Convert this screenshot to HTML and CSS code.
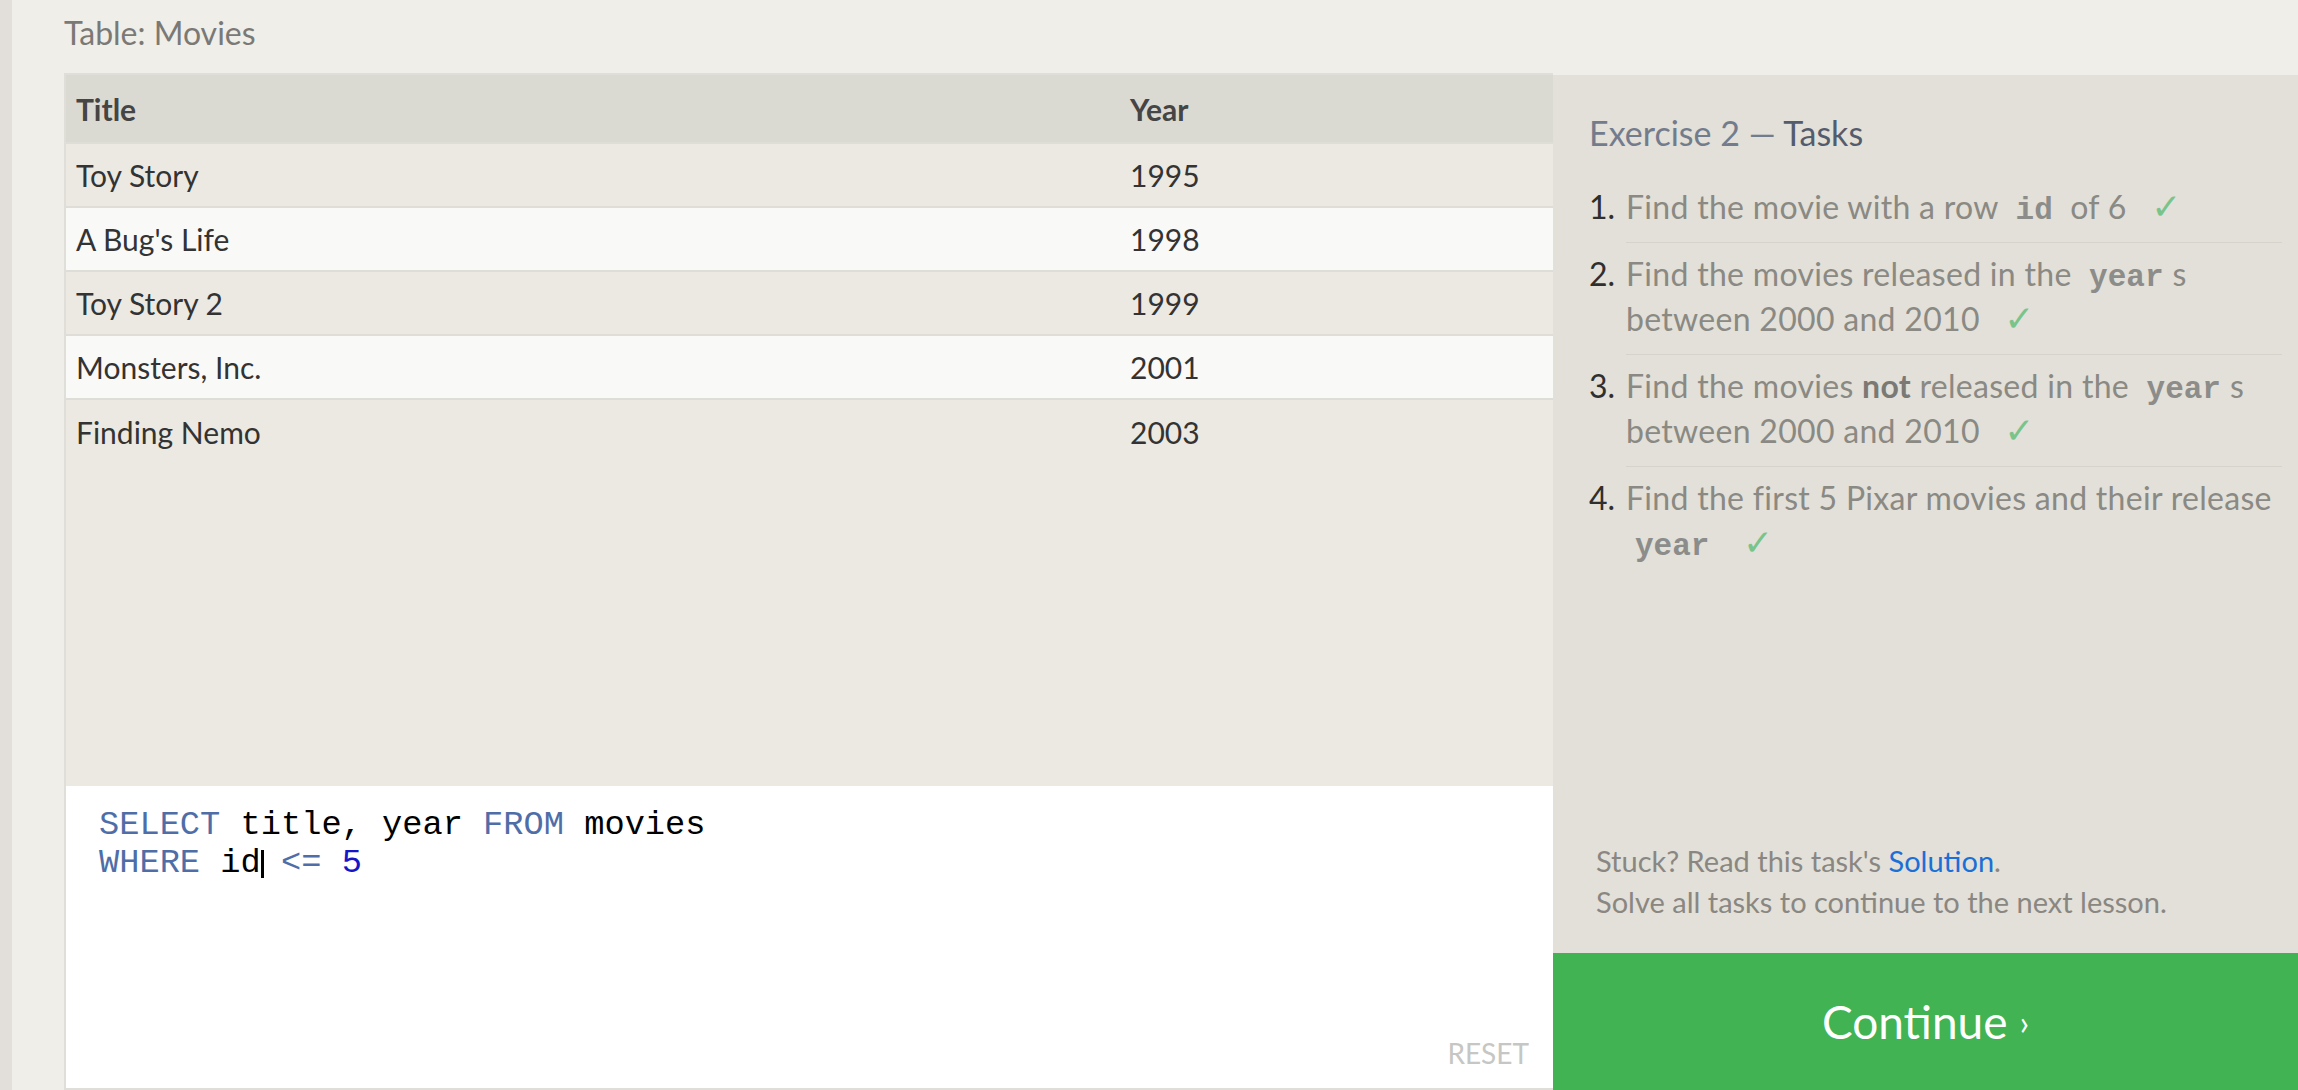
FILE: index.html
```html
<!DOCTYPE html>
<html lang="en">
<head>
<meta charset="utf-8">
<title>SQL Lesson — Movies</title>
<link rel="stylesheet" href="styles.css">
</head>
<body>
<div class="page">
  <div class="strip"></div>
  <main class="main">
    <div class="table-label">Table: Movies</div>
    <div class="workspace">
      <section class="left">
        <div class="results">
          <table class="results-table">
            <colgroup><col class="col-title"><col class="col-year"></colgroup>
            <thead>
              <tr><th>Title</th><th>Year</th></tr>
            </thead>
            <tbody>
              <tr><td>Toy Story</td><td>1995</td></tr>
              <tr><td>A Bug's Life</td><td>1998</td></tr>
              <tr><td>Toy Story 2</td><td>1999</td></tr>
              <tr><td>Monsters, Inc.</td><td>2001</td></tr>
              <tr><td>Finding Nemo</td><td>2003</td></tr>
            </tbody>
          </table>
        </div>
        <div class="editor">
          <pre class="code"><span class="kw">SELECT</span> title, year <span class="kw">FROM</span> movies
<span class="kw">WHERE</span> id<span class="cursor"></span> <span class="op">&lt;=</span> <span class="num">5</span></pre>
          <div class="reset">RESET</div>
        </div>
      </section>
      <aside class="right">
        <div class="tasks">
          <h2 class="tasks-title">Exercise 2 — <span class="tasks-strong">Tasks</span></h2>
          <ol class="task-list">
            <li class="task"><span class="task-num">1.</span><div class="task-body">Find the movie with a row <code class="kc">id</code> of 6 <span class="check">✓</span></div></li>
            <li class="task"><span class="task-num">2.</span><div class="task-body">Find the movies released in the <code class="kc">year</code>s between 2000 and 2010 <span class="check">✓</span></div></li>
            <li class="task"><span class="task-num">3.</span><div class="task-body">Find the movies <strong>not</strong> released in the <code class="kc">year</code>s between 2000 and 2010 <span class="check">✓</span></div></li>
            <li class="task"><span class="task-num">4.</span><div class="task-body">Find the first 5 Pixar movies and their release <code class="kc">year</code> <span class="check">✓</span></div></li>
          </ol>
        </div>
        <div class="footer">
          <div>Stuck? Read this task's <a class="solution" href="#">Solution</a>.</div>
          <div>Solve all tasks to continue to the next lesson.</div>
        </div>
        <div class="continue">Continue <span class="chev">›</span></div>
      </aside>
    </div>
  </main>
</div>
</body>
</html>
```

FILE: styles.css
```css
* { box-sizing: border-box; }
html, body { margin: 0; padding: 0; }
body {
  background: #f0eee8;
  font-family: Lato, "Open Sans", "DejaVu Sans", sans-serif;
  overflow: hidden;
}
.page { display: flex; height: 1090px; }
.strip { width: 12px; flex: none; background: #e2dfda; }
.main { flex: 1; min-width: 0; padding-left: 52px; display: flex; flex-direction: column; }
.table-label {
  height: 73px;
  padding-top: 15px;
  font-size: 32px;
  line-height: 36px;
  color: #7a7976;
}
.workspace { flex: 1; min-height: 0; display: flex; }

.left {
  width: 1489px;
  flex: none;
  display: flex;
  flex-direction: column;
  border-left: 2px solid #e0ded8;
  border-top: 2px solid #e0ded8;
  border-bottom: 2px solid #e0ded8;
}
.results { height: 711px; flex: none; background: #ebe9e2; }
.results-table {
  width: 100%;
  table-layout: fixed;
  border-collapse: collapse;
  font-size: 30px;
  color: #333;
}
.col-title { width: 1054px; }
.results-table th {
  height: 68px;
  padding: 0 10px;
  text-align: left;
  font-weight: bold;
  color: #454545;
  background: #dbdad2;
}
.results-table td {
  height: 64px;
  padding: 0 10px;
  border-top: 2px solid #dfddd7;
}
.results-table tbody tr:nth-child(odd) td { background: #ebe9e2; }
.results-table tbody tr:nth-child(even) td { background: #f9f9f8; }

.editor {
  flex: 1;
  background: #fff;
  display: flex;
  flex-direction: column;
}
.code {
  flex: 1;
  margin: 0;
  padding: 20px 0 0 33px;
  font-family: "Liberation Mono", "DejaVu Sans Mono", monospace;
  font-size: 33.7px;
  line-height: 38px;
  color: #000;
}
.kw { color: #4f6ea8; }
.op { color: #4f6ea8; }
.num { color: #1616c8; }
.cursor {
  display: inline-block;
  width: 3px;
  height: 28px;
  margin-right: -3px;
  vertical-align: -6px;
  background: #000;
}
.reset {
  align-self: flex-end;
  padding: 0 24px 18px 0;
  font-size: 28px;
  line-height: 34px;
  color: #c6c6c4;
}

.right {
  flex: 1;
  min-width: 0;
  margin-top: 2px;
  display: flex;
  flex-direction: column;
  background: #e2e0d8;
}
.tasks { flex: 1; padding: 39px 16px 0 36px; }
.tasks-title {
  margin: 0;
  font-size: 34px;
  line-height: 38px;
  font-weight: normal;
  color: #737c8c;
}
.tasks-strong { color: #535c6e; }
.task-list { margin: 24px 0 0; padding: 0; list-style: none; }
.task { display: flex; font-size: 32px; line-height: 45px; letter-spacing: 0.3px; }
.task-num { width: 37px; flex: none; padding-top: 8px; color: #2f2f2f; letter-spacing: 0; }
.task-body {
  flex: 1;
  padding: 8px 0 13px;
  border-bottom: 1px solid #d6d3ca;
  color: #8a8983;
}
.task:last-child .task-body { border-bottom: none; }
.task-body strong { color: #7a7974; }
.kc {
  padding: 0 9px;
  font-family: "Liberation Mono", "DejaVu Sans Mono", monospace;
  font-weight: bold;
  font-size: 31px;
  line-height: 1;
  letter-spacing: 0;
  color: #8c8c8a;
}
.check {
  margin-left: 16px;
  color: #79c48b;
  font-family: "DejaVu Sans", sans-serif;
  font-size: 36px;
  line-height: 1;
}

.footer {
  padding: 0 0 31px 43px;
  font-size: 29px;
  line-height: 41px;
  color: #8a8782;
}
.solution { color: #1b6fd6; text-decoration: none; }
.continue {
  height: 137px;
  flex: none;
  display: flex;
  align-items: center;
  justify-content: center;
  background: #41b352;
  color: #fff;
  font-size: 46px;
}
.chev { margin-left: 12px; font-size: 34px; }
```
